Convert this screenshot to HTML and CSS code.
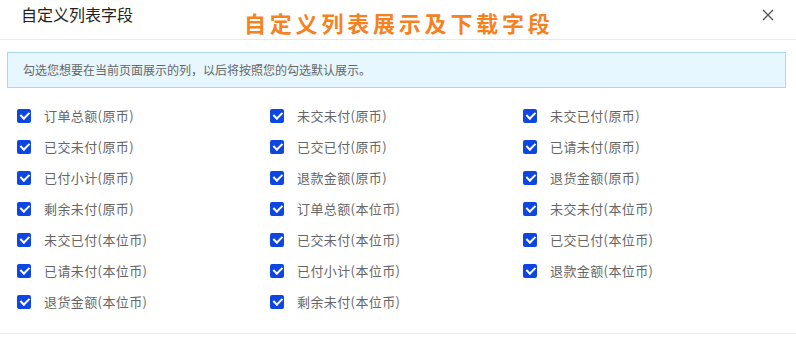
FILE: index.html
```html
<!DOCTYPE html>
<html lang="zh">
<head>
<meta charset="utf-8">
<link rel="stylesheet" href="styles.css">
</head>
<body>
<div class="dialog">
  <div class="header">
    <div class="title">自定义列表字段</div>
    <svg class="close" width="12" height="12" viewBox="0 0 12 12"><path d="M1 1L11 11M11 1L1 11" stroke="#555" stroke-width="1.4" fill="none"/></svg>
  </div>
  <div class="annot">自定义列表展示及下载字段</div>
  <div class="body">
    <div class="info">勾选您想要在当前页面展示的列，以后将按照您的勾选默认展示。</div>
    <div class="grid">
      <label class="item"><span class="cb"></span>订单总额(原币)</label>
      <label class="item"><span class="cb"></span>未交未付(原币)</label>
      <label class="item"><span class="cb"></span>未交已付(原币)</label>
      <label class="item"><span class="cb"></span>已交未付(原币)</label>
      <label class="item"><span class="cb"></span>已交已付(原币)</label>
      <label class="item"><span class="cb"></span>已请未付(原币)</label>
      <label class="item"><span class="cb"></span>已付小计(原币)</label>
      <label class="item"><span class="cb"></span>退款金额(原币)</label>
      <label class="item"><span class="cb"></span>退货金额(原币)</label>
      <label class="item"><span class="cb"></span>剩余未付(原币)</label>
      <label class="item"><span class="cb"></span>订单总额(本位币)</label>
      <label class="item"><span class="cb"></span>未交未付(本位币)</label>
      <label class="item"><span class="cb"></span>未交已付(本位币)</label>
      <label class="item"><span class="cb"></span>已交未付(本位币)</label>
      <label class="item"><span class="cb"></span>已交已付(本位币)</label>
      <label class="item"><span class="cb"></span>已请未付(本位币)</label>
      <label class="item"><span class="cb"></span>已付小计(本位币)</label>
      <label class="item"><span class="cb"></span>退款金额(本位币)</label>
      <label class="item"><span class="cb"></span>退货金额(本位币)</label>
      <label class="item"><span class="cb"></span>剩余未付(本位币)</label>
    </div>
  </div>
</div>
</body>
</html>
```
FILE: styles.css
```css
html, body {
  margin: 0;
  padding: 0;
  background: #fff;
}
body {
  font-family: "Noto Sans CJK SC", "Noto Sans", sans-serif;
}
.dialog {
  position: relative;
  width: 796px;
  height: 338px;
  overflow: hidden;
}
.header {
  height: 40px;
  box-sizing: border-box;
  border-bottom: 1px solid #e9e9e9;
  display: flex;
  align-items: center;
  justify-content: space-between;
  padding: 0 22px 12px 21px;
}
.title {
  font-size: 16px;
  color: #222;
  line-height: 20px;
}
.close {
  display: block;
  margin-top: 2px;
}
.annot {
  position: absolute;
  left: 244px;
  top: 6px;
  font-size: 22px;
  font-weight: bold;
  letter-spacing: 3.8px;
  color: #f5821f;
  line-height: 32px;
}
.body {
  padding: 12px 10px 16px 7px;
  border-bottom: 1px solid #ececec;
}
.info {
  height: 36px;
  box-sizing: border-box;
  border: 1px solid #a8d8f2;
  background: #e6f7ff;
  font-size: 12px;
  color: #666;
  line-height: 34px;
  padding-left: 15px;
}
.grid {
  display: grid;
  grid-template-columns: 253px 253px 253px;
  grid-auto-rows: 31px;
  padding: 12px 0 0 10px;
}
.item {
  display: flex;
  align-items: center;
  font-size: 13px;
  letter-spacing: 0.4px;
  color: #666;
}
.cb {
  width: 14px;
  height: 14px;
  border-radius: 2px;
  background: #0d46e3;
  margin-right: 13px;
  position: relative;
  flex: none;
}
.cb::after {
  content: "";
  position: absolute;
  left: 4.5px;
  top: 1.5px;
  width: 3.5px;
  height: 7px;
  border: solid #fff;
  border-width: 0 2px 2px 0;
  transform: rotate(45deg);
}
```
